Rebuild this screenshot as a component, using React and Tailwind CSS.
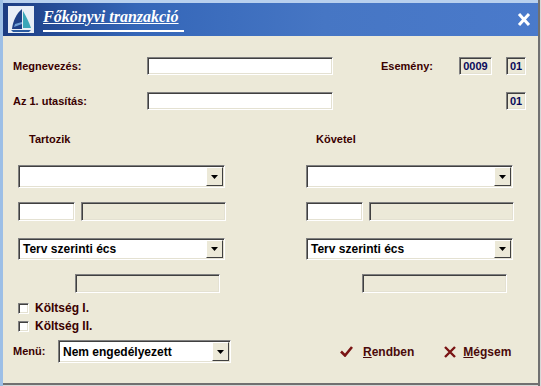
import React from "react";

const sunken =
  "border border-t-[#808080] border-l-[#808080] border-b-white border-r-white shadow-[inset_1px_1px_0_#404040,inset_-1px_-1px_0_#e4e1d2]";

function Combo({ text, className = "" }) {
  return (
    <div className={`flex bg-white ${sunken} ${className}`}>
      <div className="flex-1 flex items-center pl-[4px] text-[12px] font-bold text-black">{text}</div>
      <div className="w-[17px] my-[1px] mr-[1px] bg-[#ECE9D8] border border-t-white border-l-white border-b-[#404040] border-r-[#404040] flex items-center justify-center">
        <svg width="7" height="4" viewBox="0 0 7 4"><path d="M0 0h7L3.5 4z" fill="#000" /></svg>
      </div>
    </div>
  );
}

function Box({ className = "", white = false, children }) {
  return (
    <div className={`${white ? "bg-white" : "bg-[#ECE9D8]"} ${sunken} ${className}`}>{children}</div>
  );
}

export default function App() {
  const lbl = "text-[11px] font-bold text-[#3a0000]";
  return (
    <div
      className="w-[541px] h-[386px] flex bg-[#ECE9D8] overflow-hidden"
      style={{ fontFamily: '"Liberation Sans", Arial, sans-serif' }}
    >
      <div className="w-[3px] bg-[#9dbfe6]" />
      <div className="flex-1 flex flex-col">
        <div className="h-[3px] bg-[#b8d0ee]" />
        {/* title bar */}
        <div className="h-[33px] flex items-center bg-[linear-gradient(90deg,#1c3c82_0%,#3466b8_25%,#4676c4_60%,#4a7acb_100%)] relative">
          <div className="ml-[5px] w-[26px] h-[27px]">
            <svg width="26" height="27" viewBox="0 0 26 27">
              <rect x="0" y="0" width="26" height="27" fill="#e8eef6" />
              <path d="M14 3 C8 8 5 15 4 23 L14 23 Z" fill="#1d3f86" />
              <path d="M15 5 C18 10 21 16 23 22 L15 22 Z" fill="#3aa6b8" />
              <path d="M3 24 L23 24 L21 26 L5 26 Z" fill="#2a5aa0" />
              <path d="M7 18 L14 16 L14 18 L6 21 Z" fill="#6fa0d6" />
            </svg>
          </div>
          <div className="ml-[9px] -mt-[3px] border-b-2 border-white pr-[5px] pb-[1px]">
            <span
              className="text-white text-[16px] font-bold italic underline"
              style={{ fontFamily: '"Liberation Serif", "Times New Roman", serif' }}
            >
              Főkönyvi tranzakció
            </span>
          </div>
          <div className="ml-auto mr-[7px] text-white">
            <svg width="14" height="13" viewBox="0 0 14 13">
              <path d="M2 1 L12 12 M12 1 L2 12" stroke="#fff" strokeWidth="3" />
            </svg>
          </div>
        </div>
        {/* body */}
        <div className="flex-1 flex flex-col relative">
          {/* row 1 */}
          <div className="mt-[21px] h-[18px] flex items-center">
            <div className={`${lbl} ml-[10px] w-[134px]`}>Megnevezés:</div>
            <Box white className="w-[186px] h-[18px]" />
            <div className={`${lbl} ml-[48px] w-[78px]`}>Esemény:</div>
            <Box className="w-[33px] h-[18px] flex items-center justify-center text-[11px] font-bold text-[#0a0a5a]">0009</Box>
            <Box className="ml-[14px] w-[20px] h-[18px] flex items-center justify-center text-[11px] font-bold text-[#0a0a5a]">01</Box>
          </div>
          {/* row 2 */}
          <div className="mt-[17px] h-[18px] flex items-center">
            <div className={`${lbl} ml-[10px] w-[134px]`}>Az 1. utasítás:</div>
            <Box white className="w-[186px] h-[18px]" />
            <Box className="ml-[173px] w-[20px] h-[18px] flex items-center justify-center text-[11px] font-bold text-[#0a0a5a]">01</Box>
          </div>
          {/* headings */}
          <div className="mt-[22px] h-[14px] flex items-center">
            <div className={`${lbl} ml-[26px] w-[287px]`}>Tartozik</div>
            <div className={lbl}>Követel</div>
          </div>
          {/* combos */}
          <div className="mt-[19px] flex">
            <Combo className="ml-[15px] w-[207px] h-[23px]" />
            <Combo className="ml-[81px] w-[207px] h-[23px]" />
          </div>
          <div className="mt-[14px] flex">
            <Box white className="ml-[15px] w-[57px] h-[19px]" />
            <Box className="ml-[6px] w-[145px] h-[19px]" />
            <Box white className="ml-[80px] w-[57px] h-[19px]" />
            <Box className="ml-[6px] w-[145px] h-[19px]" />
          </div>
          <div className="mt-[17px] flex">
            <Combo text="Terv szerinti écs" className="ml-[15px] w-[207px] h-[22px]" />
            <Combo text="Terv szerinti écs" className="ml-[81px] w-[207px] h-[22px]" />
          </div>
          <div className="mt-[14px] flex">
            <Box className="ml-[72px] w-[145px] h-[19px]" />
            <Box className="ml-[142px] w-[145px] h-[19px]" />
          </div>
          {/* checkboxes */}
          <div className="mt-[9px] flex items-center h-[12px]">
            <Box white className="ml-[15px] w-[11px] h-[11px]" />
            <div className="ml-[6px] text-[12px] font-bold text-[#3a0000]">Költség I.</div>
          </div>
          <div className="mt-[6px] flex items-center h-[12px]">
            <Box white className="ml-[15px] w-[11px] h-[11px]" />
            <div className="ml-[6px] text-[12px] font-bold text-[#3a0000]">Költség II.</div>
          </div>
          {/* menu row */}
          <div className="mt-[8px] flex items-center">
            <div className={`${lbl} ml-[10px] w-[45px]`}>Menü:</div>
            <Combo text="Nem engedélyezett" className="w-[173px] h-[23px]" />
            <div className="ml-[109px] flex items-center">
              <svg width="13" height="11" viewBox="0 0 13 11">
                <path d="M1 5.5 L5 9.5 L12 1" stroke="#7a1414" strokeWidth="2.6" fill="none" />
              </svg>
              <span className="ml-[10px] text-[12px] font-bold text-[#4a0a0a]">
                <span className="underline">R</span>endben
              </span>
            </div>
            <div className="ml-[30px] flex items-center">
              <svg width="12" height="12" viewBox="0 0 12 12">
                <path d="M1 1 L11 11 M11 1 L1 11" stroke="#7a1414" strokeWidth="2.4" />
              </svg>
              <span className="ml-[7px] text-[12px] font-bold text-[#4a0a0a]">
                <span className="underline">M</span>égsem
              </span>
            </div>
          </div>
          <div className="flex-1" />
          <div className="h-[2px] bg-[#707070]" />
          <div className="h-[1px] bg-[#d8d8d8]" />
        </div>
      </div>
      <div className="w-[2px] bg-[#707070]" />
      <div className="w-[1px] bg-[#d8d8d8]" />
    </div>
  );
}
